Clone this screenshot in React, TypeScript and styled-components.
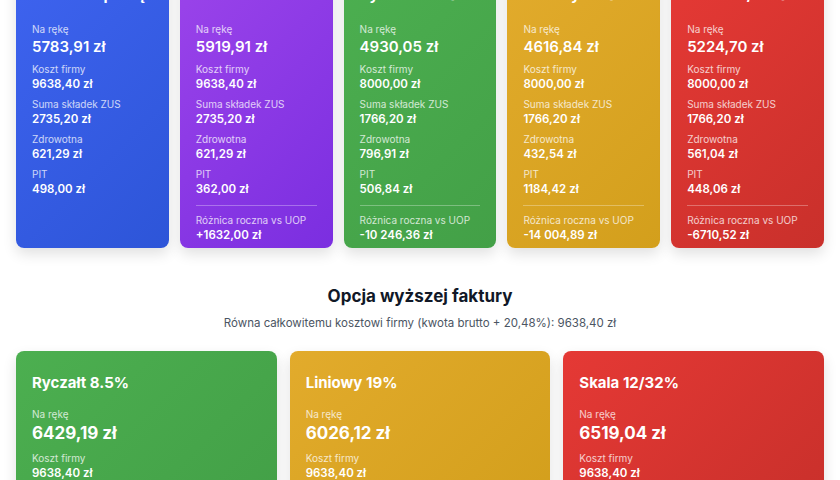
import styled, { createGlobalStyle } from "styled-components";

const Global = createGlobalStyle`
  body { margin: 0; background: #fff; font-family: Inter, "Noto Sans", sans-serif; color: #1f2937; }
`;

const Page = styled.div`
  width: 840px;
  height: 480px;
  overflow: hidden;
`;

const Inner = styled.div`
  margin-top: -31px;
  padding: 0 16px;
`;

const TopRow = styled.div`
  display: grid;
  grid-template-columns: repeat(5, 1fr);
  gap: 11px;
`;

const Card = styled.div<{ $bg: string; $pad?: number; $h?: number }>`
  box-sizing: border-box;
  background: ${(p) => p.$bg};
  color: #fff;
  border-radius: 8px;
  padding: ${(p) => p.$pad ?? 16}px 16px 16px;
  box-shadow: 0 6px 14px rgba(0, 0, 0, 0.12);
  display: flex;
  flex-direction: column;
  ${(p) => (p.$h ? `height: ${p.$h}px;` : "")}
`;

const Title = styled.h3<{ $mb?: number }>`
  margin: 0 0 ${(p) => p.$mb ?? 18}px;
  font-size: 15px;
  font-weight: 700;
  line-height: 20px;
  white-space: nowrap;
`;

const Label = styled.div`
  font-size: 10px;
  line-height: 13px;
  opacity: 0.75;
`;

const Value = styled.div<{ $big?: boolean }>`
  font-size: ${(p) => (p.$big ? 15 : 11.5)}px;
  font-weight: 600;
  line-height: ${(p) => (p.$big ? 20 : 15)}px;
  margin: 1px 0 6px;
`;

const Divider = styled.div`
  border-top: 1px solid rgba(255, 255, 255, 0.3);
  margin: 2px 0 8px;
`;

const Section = styled.div`
  text-align: center;
  margin: 38px 0 21px;
`;

const H2 = styled.h2`
  margin: 0 0 10px;
  font-size: 17px;
  font-weight: 700;
  color: #111827;
`;

const Sub = styled.p`
  margin: 0;
  font-size: 11.5px;
  color: #4b5563;
`;

const BottomRow = styled.div`
  display: grid;
  grid-template-columns: repeat(3, 1fr);
  gap: 13px;
`;

const BigValue = styled.div`
  font-size: 17px;
  font-weight: 700;
  line-height: 22px;
  margin: 1px 0 8px;
`;

const blue = "linear-gradient(135deg, #3e63ef, #2d55d8)";
const purple = "linear-gradient(135deg, #9b44ea, #7b2ee0)";
const green = "linear-gradient(135deg, #4caf50, #43a047)";
const gold = "linear-gradient(135deg, #e2ab2c, #d39f1c)";
const red = "linear-gradient(135deg, #e53935, #c9302b)";

type Top = { title: string; bg: string; net: string; cost: string; zus: string; zdr: string; pit: string; diff?: string };

const top: Top[] = [
  { title: "Umowa o pracę", bg: blue, net: "5783,91 zł", cost: "9638,40 zł", zus: "2735,20 zł", zdr: "621,29 zł", pit: "498,00 zł" },
  { title: "Umowa zlecenie", bg: purple, net: "5919,91 zł", cost: "9638,40 zł", zus: "2735,20 zł", zdr: "621,29 zł", pit: "362,00 zł", diff: "+1632,00 zł" },
  { title: "Ryczałt 8.5%", bg: green, net: "4930,05 zł", cost: "8000,00 zł", zus: "1766,20 zł", zdr: "796,91 zł", pit: "506,84 zł", diff: "-10 246,36 zł" },
  { title: "Liniowy 19%", bg: gold, net: "4616,84 zł", cost: "8000,00 zł", zus: "1766,20 zł", zdr: "432,54 zł", pit: "1184,42 zł", diff: "-14 004,89 zł" },
  { title: "Skala 12/32%", bg: red, net: "5224,70 zł", cost: "8000,00 zł", zus: "1766,20 zł", zdr: "561,04 zł", pit: "448,06 zł", diff: "-6710,52 zł" },
];

const bottom = [
  { title: "Ryczałt 8.5%", bg: green, net: "6429,19 zł" },
  { title: "Liniowy 19%", bg: gold, net: "6026,12 zł" },
  { title: "Skala 12/32%", bg: red, net: "6519,04 zł" },
];

export default function App() {
  return (
    <Page>
      <Global />
      <Inner>
        <TopRow>
          {top.map((c) => (
            <Card key={c.title} $bg={c.bg} $h={279}>
              <Title>{c.title}</Title>
              <Label>Na rękę</Label>
              <Value $big>{c.net}</Value>
              <Label>Koszt firmy</Label>
              <Value>{c.cost}</Value>
              <Label>Suma składek ZUS</Label>
              <Value>{c.zus}</Value>
              <Label>Zdrowotna</Label>
              <Value>{c.zdr}</Value>
              <Label>PIT</Label>
              <Value>{c.pit}</Value>
              {c.diff && (
                <>
                  <Divider />
                  <Label>Różnica roczna vs UOP</Label>
                  <Value>{c.diff}</Value>
                </>
              )}
            </Card>
          ))}
        </TopRow>
        <Section>
          <H2>Opcja wyższej faktury</H2>
          <Sub>Równa całkowitemu kosztowi firmy (kwota brutto + 20,48%): 9638,40 zł</Sub>
        </Section>
        <BottomRow>
          {bottom.map((c) => (
            <Card key={c.title} $bg={c.bg} $pad={22}>
              <Title $mb={15}>{c.title}</Title>
              <Label>Na rękę</Label>
              <BigValue>{c.net}</BigValue>
              <Label>Koszt firmy</Label>
              <Value>9638,40 zł</Value>
            </Card>
          ))}
        </BottomRow>
      </Inner>
    </Page>
  );
}
